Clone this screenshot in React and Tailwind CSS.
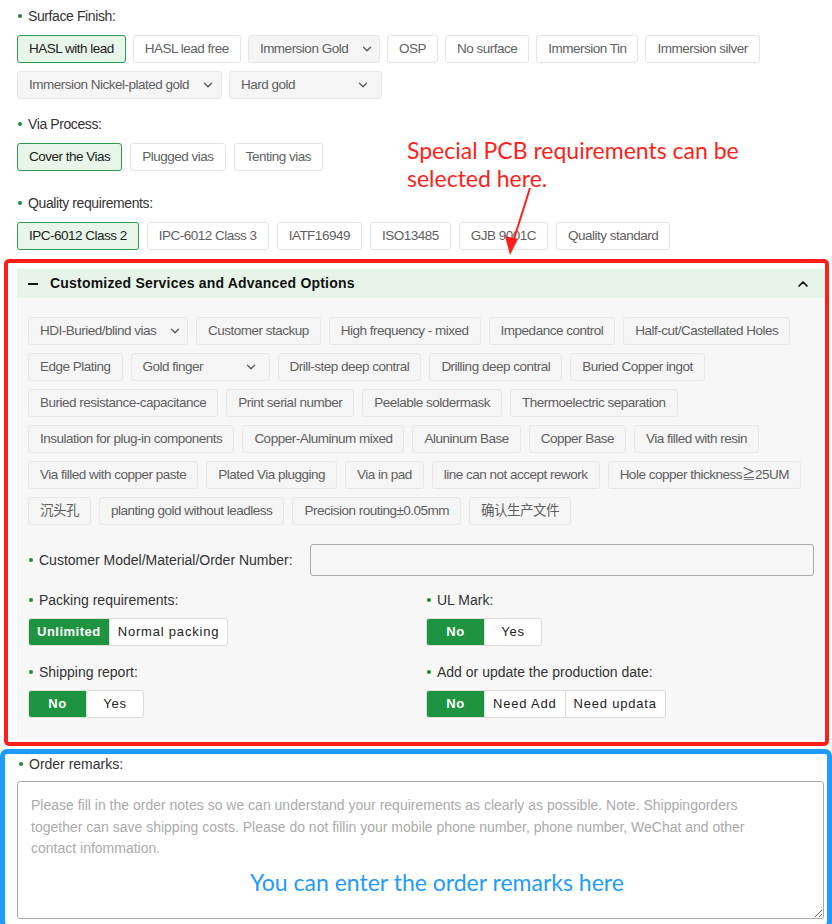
import { ChevronDown, ChevronUp } from 'lucide-react'

const surfaceRow1 = [
  { label: 'HASL with lead', selected: true },
  { label: 'HASL lead free' },
  { label: 'Immersion Gold', dropdown: true, width: 'w-[132px]' },
  { label: 'OSP' },
  { label: 'No surface' },
  { label: 'Immersion Tin' },
  { label: 'Immersion silver' },
]

const surfaceRow2 = [
  { label: 'Immersion Nickel-plated gold', dropdown: true, width: 'w-[205px]' },
  { label: 'Hard gold', dropdown: true, width: 'w-[153px]' },
]

const viaOptions = [
  { label: 'Cover the Vias', selected: true },
  { label: 'Plugged vias' },
  { label: 'Tenting vias' },
]

const qualityOptions = [
  { label: 'IPC-6012 Class 2', selected: true },
  { label: 'IPC-6012 Class 3' },
  { label: 'IATF16949' },
  { label: 'ISO13485' },
  { label: 'GJB 9001C' },
  { label: 'Quality standard' },
]

const advancedRows = [
  [
    { label: 'HDI-Buried/blind vias', dropdown: true, width: 'w-[160px]' },
    { label: 'Customer stackup' },
    { label: 'High frequency - mixed' },
    { label: 'Impedance control' },
    { label: 'Half-cut/Castellated Holes' },
  ],
  [
    { label: 'Edge Plating' },
    { label: 'Gold finger', dropdown: true, width: 'w-[139px]' },
    { label: 'Drill-step deep contral' },
    { label: 'Drilling deep contral' },
    { label: 'Buried Copper ingot' },
  ],
  [
    { label: 'Buried resistance-capacitance' },
    { label: 'Print serial number' },
    { label: 'Peelable soldermask' },
    { label: 'Thermoelectric separation' },
  ],
  [
    { label: 'Insulation for plug-in components' },
    { label: 'Copper-Aluminum mixed' },
    { label: 'Aluninum Base' },
    { label: 'Copper Base' },
    { label: 'Via filled with resin' },
  ],
  [
    { label: 'Via filled with copper paste' },
    { label: 'Plated Via plugging' },
    { label: 'Via in pad' },
    { label: 'line can not accept rework' },
    { label: 'Hole copper thickness≧25UM' },
  ],
  [
    { label: '沉头孔' },
    { label: 'planting gold without leadless' },
    { label: 'Precision routing±0.05mm' },
    { label: '确认生产文件' },
  ],
]

const Dot = () => <span className="inline-block w-[4px] h-[4px] rounded-full bg-[#1a8a3c] shrink-0" />

const Label = ({ children, className = '' }) => (
  <div className={`flex items-center gap-[6px] leading-[20px] text-[14px] text-[#333] ${className}`}>
    <Dot />
    <span>{children}</span>
  </div>
)

const Option = ({ label, selected, dropdown, width = '', panel }) => {
  let tone = 'bg-white border-[#e4e4e4] text-[#5f5f5f]'
  if (selected) tone = 'bg-[#e8f5e9] border-[#2e9a4e] text-[#222]'
  else if (dropdown || panel) tone = 'bg-[#f5f5f5] border-[#e8e8e8] text-[#5f5f5f]'

  return (
    <button
      type="button"
      className={`h-[28px] px-[11px] border rounded-[3px] text-[13.5px] tracking-[-0.5px] flex items-center whitespace-nowrap ${dropdown ? 'justify-between gap-3' : ''} ${width} ${tone}`}
    >
      <span>{label}</span>
      {dropdown && <ChevronDown size={14} strokeWidth={2.2} className="text-[#555] shrink-0" />}
    </button>
  )
}

const Segmented = ({ items, active }) => (
  <div className="inline-flex h-[28px] border border-[#dcdcdc] rounded-[3px] overflow-hidden bg-white">
    {items.map((item, i) => (
      <div
        key={item}
        className={`min-w-[57px] px-2 flex items-center justify-center text-[13px] ${i > 0 ? 'border-l border-[#dcdcdc]' : ''} ${
          i === active ? 'bg-[#1e9340] text-white font-bold tracking-[0.5px]' : 'text-[#222] font-medium tracking-[0.8px]'
        }`}
      >
        {item}
      </div>
    ))}
  </div>
)

export default function App() {
  return (
    <div className="relative w-[832px] h-[924px] overflow-hidden bg-white font-['Liberation_Sans','Noto_Sans_CJK_SC',Arial,sans-serif]">
      <div className="px-[17px] pt-[6px]">
        <Label className="tracking-[-0.4px] pl-[1px]">Surface Finish:</Label>
        <div className="mt-[9px] flex flex-col gap-2">
          <div className="flex gap-[7px]">
            {surfaceRow1.map((o) => <Option key={o.label} {...o} />)}
          </div>
          <div className="flex gap-[7px]">
            {surfaceRow2.map((o) => <Option key={o.label} {...o} />)}
          </div>
        </div>

        <Label className="mt-[15px] tracking-[-0.4px] pl-[1px]">Via Process:</Label>
        <div className="mt-[9px] flex gap-[8px]">
          {viaOptions.map((o) => <Option key={o.label} {...o} />)}
        </div>

        <Label className="mt-[22px] tracking-[-0.4px] pl-[1px]">Quality requirements:</Label>
        <div className="mt-[9px] flex gap-[8px]">
          {qualityOptions.map((o) => <Option key={o.label} {...o} />)}
        </div>
      </div>

      {/* red annotation box */}
      <div className="mt-[9px] ml-[4px] w-[825px] border-4 border-[#ff1f1a] rounded-[5px] pt-[6px] pb-[4px] pl-[9px]">
        <div className="bg-[#f7f7f7]">
          <div className="h-[29px] bg-[#e7f5e8] flex items-center pl-[11px] pr-[14px]">
            <span className="w-[10px] h-[2px] bg-[#111]" />
            <span className="ml-[12px] text-[14px] font-bold tracking-[0.2px] text-[#111]">
              Customized Services and Advanced Options
            </span>
            <ChevronUp size={16} strokeWidth={2.6} className="ml-auto text-[#111]" />
          </div>

          <div className="px-[11px] pt-[19px] pb-[20px]">
            <div className="flex flex-col gap-2">
              {advancedRows.map((row, i) => (
                <div key={i} className="flex gap-2">
                  {row.map((o) => <Option key={o.label} {...o} panel />)}
                </div>
              ))}
            </div>

            <div className="mt-[19px] flex items-center">
              <Label className="w-[282px] pl-[1px]">Customer Model/Material/Order Number:</Label>
              <input type="text" className="h-[32px] flex-1 border border-[#aaa] rounded-[3px] bg-transparent outline-none" />
            </div>

            <div className="mt-[14px] grid grid-cols-[398px_1fr] gap-y-[16px]">
              <div>
                <Label className="pl-[1px]">Packing requirements:</Label>
                <div className="mt-[8px]">
                  <Segmented items={['Unlimited', 'Normal packing']} active={0} />
                </div>
              </div>
              <div>
                <Label className="pl-[1px]">UL Mark:</Label>
                <div className="mt-[8px]">
                  <Segmented items={['No', 'Yes']} active={0} />
                </div>
              </div>
              <div>
                <Label className="pl-[1px]">Shipping report:</Label>
                <div className="mt-[8px]">
                  <Segmented items={['No', 'Yes']} active={0} />
                </div>
              </div>
              <div>
                <Label className="pl-[1px]">Add or update the production date:</Label>
                <div className="mt-[8px]">
                  <Segmented items={['No', 'Need Add', 'Need updata']} active={0} />
                </div>
              </div>
            </div>
          </div>
        </div>
      </div>

      {/* blue annotation box */}
      <div className="mt-[3px] border-[5px] border-[#1e9bff] rounded-[7px] pl-[12px] pr-[3px] h-[180px]">
        <Label className="leading-[16px] pl-[2px]">Order remarks:</Label>
        <div className="relative mt-[7px]">
          <textarea
            className="block w-full h-[138px] border border-[#aaa] rounded-[3px] pl-[13px] pr-[10px] pt-[13px] text-[14px] leading-[21.5px] text-[#333] placeholder:text-[#aaa] outline-none resize-y"
            placeholder={
              'Please fill in the order notes so we can understand your requirements as clearly as possible. Note. Shippingorders\ntogether can save shipping costs. Please do not fillin your mobile phone number, phone number, WeChat and other\ncontact infommation.'
            }
          />
          <div className="absolute left-[233px] top-[86px] text-[23px] leading-[30px] text-[#1e9bff] font-['Lato',sans-serif] pointer-events-none whitespace-nowrap">
            You can enter the order remarks here
          </div>
        </div>
      </div>

      {/* red callout */}
      <div className="absolute left-[407px] top-[136px] text-[23px] leading-[28px] text-[#ff1f1a] font-['Lato',sans-serif] pointer-events-none">
        Special PCB requirements can be
        <br />
        selected here.
      </div>
      <svg className="absolute left-0 top-0 pointer-events-none" width="832" height="300">
        <line x1="530" y1="188" x2="513" y2="242" stroke="#ff1f1a" strokeWidth="2" />
        <polygon points="510,255 505,236 518,239" fill="#ff1f1a" />
      </svg>
    </div>
  )
}
